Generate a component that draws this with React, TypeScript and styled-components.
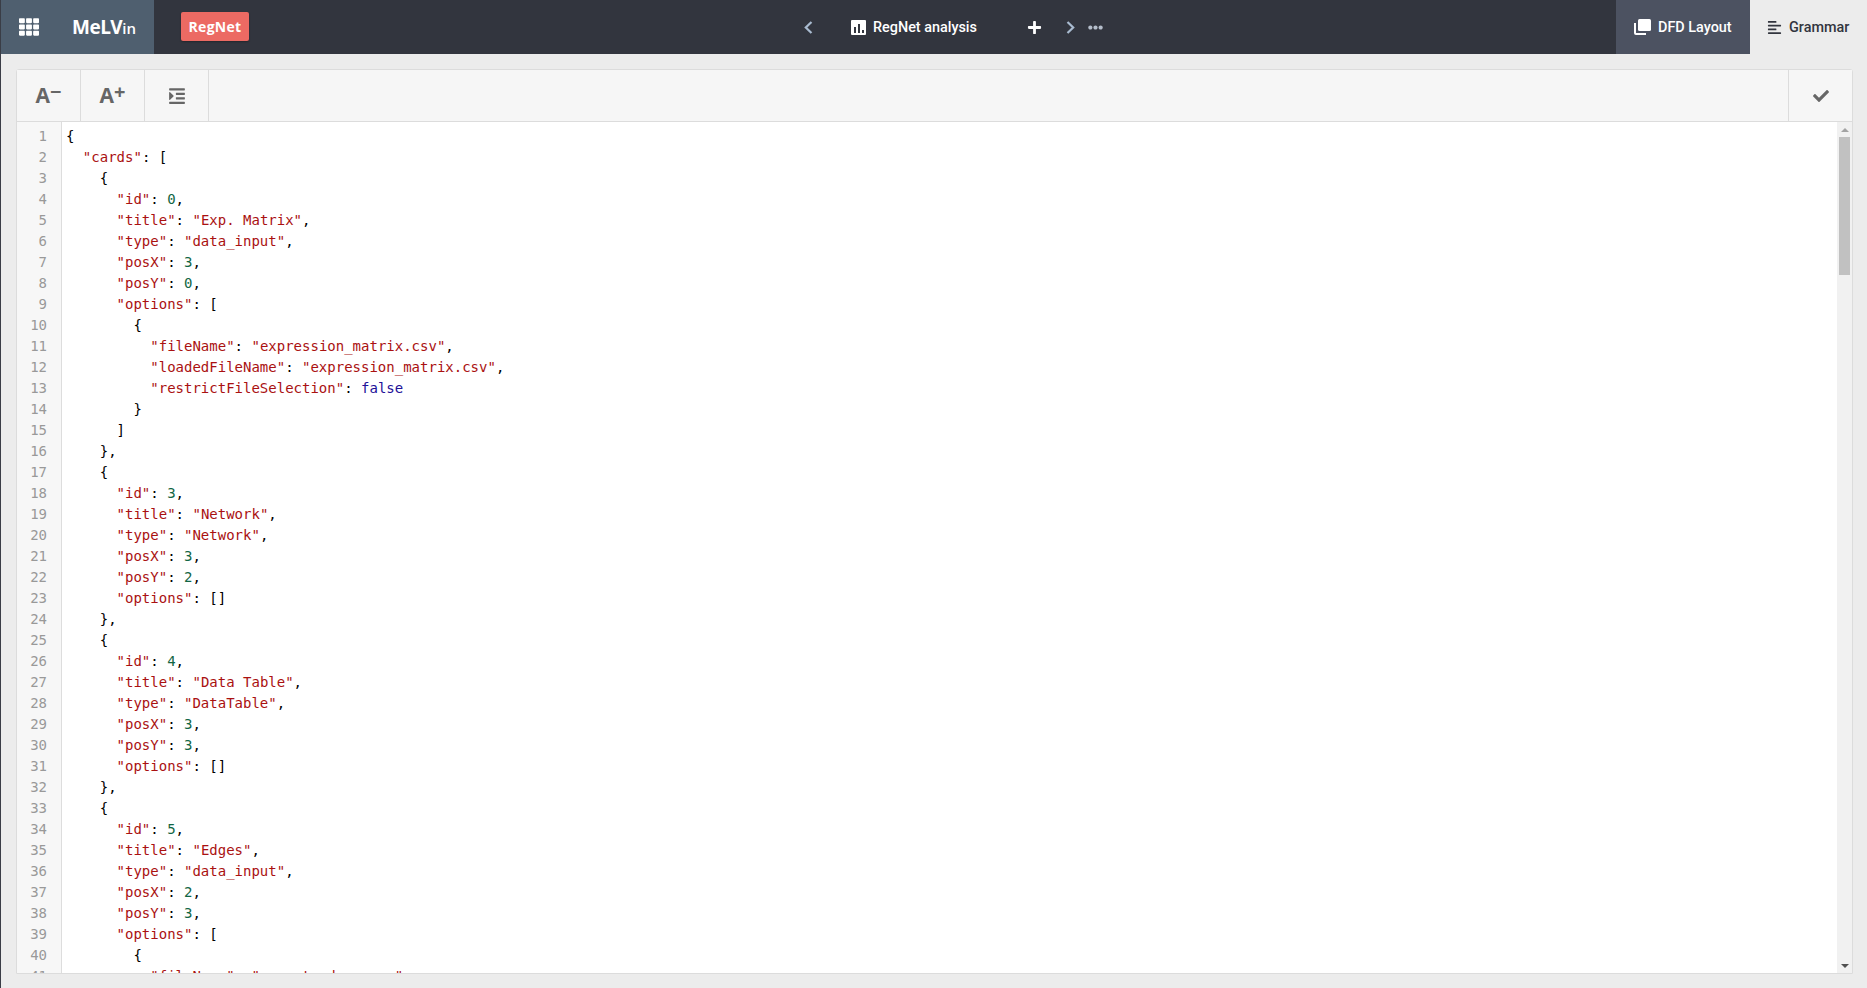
import styled, { createGlobalStyle } from 'styled-components';
import { FaAlignLeft, FaCheck, FaEllipsisH, FaIndent, FaPlus, FaTh } from 'react-icons/fa';

const GlobalStyle = createGlobalStyle`
  html, body {
    margin: 0;
    padding: 0;
    height: 100%;
    overflow: hidden;
    background: #ececec;
  }
`;

const Page = styled.div`
  display: flex;
  flex-direction: column;
  height: 988px;
  background: #ececec;
  border-left: 1px solid #3a3d46;
  box-sizing: border-box;
  font-family: Roboto, sans-serif;
`;

const Nav = styled.nav`
  display: flex;
  align-items: stretch;
  height: 54px;
  flex: none;
  background: #32353e;
  color: #fff;
`;

const LogoPanel = styled.div`
  display: flex;
  align-items: center;
  width: 153px;
  padding-left: 18px;
  gap: 33px;
  box-sizing: border-box;
  background: #4f5f6f;
  font-size: 20px;
`;

const Logo = styled.div`
  font-family: 'Open Sans', sans-serif;
  font-weight: 700;
  font-size: 19px;
  letter-spacing: -0.5px;
  small {
    font-size: 15px;
    font-weight: 600;
    letter-spacing: 0;
  }
`;

const Badge = styled.div`
  align-self: center;
  display: flex;
  align-items: center;
  justify-content: center;
  width: 68px;
  height: 29px;
  margin: 0 0 1px 27px;
  background: #ec6a63;
  border-radius: 2px;
  box-shadow: 0 1px 2px rgba(0, 0, 0, 0.3);
  font-family: 'Open Sans', sans-serif;
  font-weight: 700;
  font-size: 14px;
  letter-spacing: 0.3px;
`;

const Center = styled.div`
  display: flex;
  align-items: center;
  margin-left: 555px;
`;

const Chevron = styled.svg<{ $gap: number }>`
  width: 9px;
  height: 13px;
  margin-left: ${(p) => p.$gap}px;
  fill: none;
  stroke: #a9bbd0;
  stroke-width: 2.2;
`;

const ChartBox = styled.svg`
  width: 15px;
  height: 15px;
  margin-left: 38px;
  margin-right: 7px;
`;

const ReportName = styled.span`
  font-size: 14.4px;
  font-weight: 500;
  width: 105px;
  white-space: nowrap;
`;

const AddButton = styled.span`
  display: flex;
  margin-left: 49px;
  font-size: 15px;
`;

const More = styled.span`
  display: flex;
  margin-left: 13px;
  color: #b4bdca;
  font-size: 15px;
`;

const Tabs = styled.div`
  display: flex;
  margin-left: auto;
`;

const Tab = styled.div<{ $active?: boolean }>`
  display: flex;
  align-items: center;
  gap: 7px;
  box-sizing: border-box;
  width: ${(p) => (p.$active ? 117 : 134)}px;
  padding-left: ${(p) => (p.$active ? 17 : 18)}px;
  background: ${(p) => (p.$active ? '#ececec' : '#4c5261')};
  color: ${(p) => (p.$active ? '#32353e' : '#fff')};
  font-size: 14.4px;
  font-weight: 500;
  white-space: nowrap;
`;

const Editor = styled.section`
  display: flex;
  flex-direction: column;
  height: 905px;
  margin: 15px 14px 0 15px;
  border: 1px solid #dcdcdc;
  border-radius: 3px 3px 0 0;
  box-sizing: border-box;
  background: #fff;
`;

const Toolbar = styled.div`
  display: flex;
  flex: none;
  height: 51px;
  background: #f6f6f6;
  border-bottom: 1px solid #dcdcdc;
`;

const ToolButton = styled.div`
  display: flex;
  align-items: center;
  justify-content: center;
  width: 63px;
  border-right: 1px solid #dcdcdc;
  color: #666;
  font-size: 18px;
`;

const ConfirmButton = styled(ToolButton)`
  margin-left: auto;
  border-right: none;
  border-left: 1px solid #dcdcdc;
`;

const FontGlyph = styled.span`
  font-family: 'Open Sans', sans-serif;
  font-size: 21px;
  font-weight: 700;
  line-height: 1;
  sup {
    font-size: 20px;
    line-height: 0;
    vertical-align: 4px;
  }
`;

const Body = styled.div`
  display: flex;
  flex: 1;
  min-height: 0;
  overflow: hidden;
`;

const Gutter = styled.div`
  flex: none;
  width: 45px;
  box-sizing: border-box;
  padding: 4px 14px 0 0;
  background: #f7f7f7;
  border-right: 1px solid #ddd;
  color: #999;
  text-align: right;
  font: 14px/21px 'DejaVu Sans Mono', monospace;
`;

const Code = styled.pre`
  flex: 1;
  margin: 0;
  padding: 4px 0 0 4px;
  overflow: hidden;
  color: #000;
  font: 14px/21px 'DejaVu Sans Mono', monospace;
`;

const Token = styled.span<{ $kind: TokenKind }>`
  color: ${(p) => tokenColors[p.$kind]};
`;

const Scrollbar = styled.div`
  display: flex;
  flex: none;
  flex-direction: column;
  align-items: center;
  width: 15px;
  background: #f1f1f1;
`;

const ArrowUp = styled.div`
  width: 0;
  height: 0;
  margin-top: 6px;
  border: solid transparent;
  border-width: 0 4px 4px;
  border-bottom-color: #a3a3a3;
`;

const ArrowDown = styled.div`
  width: 0;
  height: 0;
  margin: auto 0 5px;
  border: solid transparent;
  border-width: 4px 4px 0;
  border-top-color: #505050;
`;

const Thumb = styled.div`
  width: 11px;
  height: 138px;
  margin-top: 5px;
  background: #c1c1c1;
`;

type TokenKind = 'string' | 'number' | 'atom' | 'plain';

const tokenColors: Record<TokenKind, string> = {
  string: '#aa1111',
  number: '#116644',
  atom: '#221199',
  plain: '#000',
};

const source = `{
  "cards": [
    {
      "id": 0,
      "title": "Exp. Matrix",
      "type": "data_input",
      "posX": 3,
      "posY": 0,
      "options": [
        {
          "fileName": "expression_matrix.csv",
          "loadedFileName": "expression_matrix.csv",
          "restrictFileSelection": false
        }
      ]
    },
    {
      "id": 3,
      "title": "Network",
      "type": "Network",
      "posX": 3,
      "posY": 2,
      "options": []
    },
    {
      "id": 4,
      "title": "Data Table",
      "type": "DataTable",
      "posX": 3,
      "posY": 3,
      "options": []
    },
    {
      "id": 5,
      "title": "Edges",
      "type": "data_input",
      "posX": 2,
      "posY": 3,
      "options": [
        {
          "fileName": "expert_edges.csv",`;

const lines = source.split('\n');

const tokenize = (line: string) => {
  const parts = line.split(/("[^"]*"|\b\d+\b|\bfalse\b)/);
  return parts.map((text, i) => {
    let kind: TokenKind = 'plain';
    if (text.startsWith('"')) kind = 'string';
    else if (/^\d+$/.test(text)) kind = 'number';
    else if (text === 'false') kind = 'atom';
    return (
      <Token key={i} $kind={kind}>
        {text}
      </Token>
    );
  });
};

const App = () => {
  return (
    <Page>
      <GlobalStyle />
      <Nav>
        <LogoPanel>
          <FaTh />
          <Logo>
            MeLV<small>in</small>
          </Logo>
        </LogoPanel>
        <Badge>RegNet</Badge>
        <Center>
          <Chevron $gap={0} viewBox='0 0 9 13'>
            <polyline points='7.5,1 1.8,6.5 7.5,12' />
          </Chevron>
          <ChartBox viewBox='0 0 15 15'>
            <rect width='15' height='15' rx='1' fill='#fff' />
            <rect x='3' y='7' width='2' height='6' fill='#32353e' />
            <rect x='7' y='4' width='2' height='9' fill='#32353e' />
            <rect x='11' y='10' width='2' height='3' fill='#32353e' />
          </ChartBox>
          <ReportName>RegNet analysis</ReportName>
          <AddButton>
            <FaPlus />
          </AddButton>
          <Chevron $gap={24} viewBox='0 0 9 13'>
            <polyline points='1.5,1 7.2,6.5 1.5,12' />
          </Chevron>
          <More>
            <FaEllipsisH />
          </More>
        </Center>
        <Tabs>
          <Tab>
            <svg width='17' height='16' viewBox='0 0 17 16'>
              <rect x='4' y='0' width='13' height='12' rx='1.5' fill='#fff' />
              <path d='M1 4v10a1 1 0 0 0 1 1h10' fill='none' stroke='#fff' strokeWidth='2' />
            </svg>
            DFD Layout
          </Tab>
          <Tab $active>
            <FaAlignLeft size={15} />
            Grammar
          </Tab>
        </Tabs>
      </Nav>
      <Editor>
        <Toolbar>
          <ToolButton>
            <FontGlyph>
              A<sup>−</sup>
            </FontGlyph>
          </ToolButton>
          <ToolButton>
            <FontGlyph>
              A<sup>+</sup>
            </FontGlyph>
          </ToolButton>
          <ToolButton>
            <FaIndent />
          </ToolButton>
          <ConfirmButton>
            <FaCheck size={16} />
          </ConfirmButton>
        </Toolbar>
        <Body>
          <Gutter>
            {lines.map((_, i) => (
              <div key={i}>{i + 1}</div>
            ))}
          </Gutter>
          <Code>
            {lines.map((line, i) => (
              <div key={i}>{tokenize(line)}</div>
            ))}
          </Code>
          <Scrollbar>
            <ArrowUp />
            <Thumb />
            <ArrowDown />
          </Scrollbar>
        </Body>
      </Editor>
    </Page>
  );
};

export default App;
